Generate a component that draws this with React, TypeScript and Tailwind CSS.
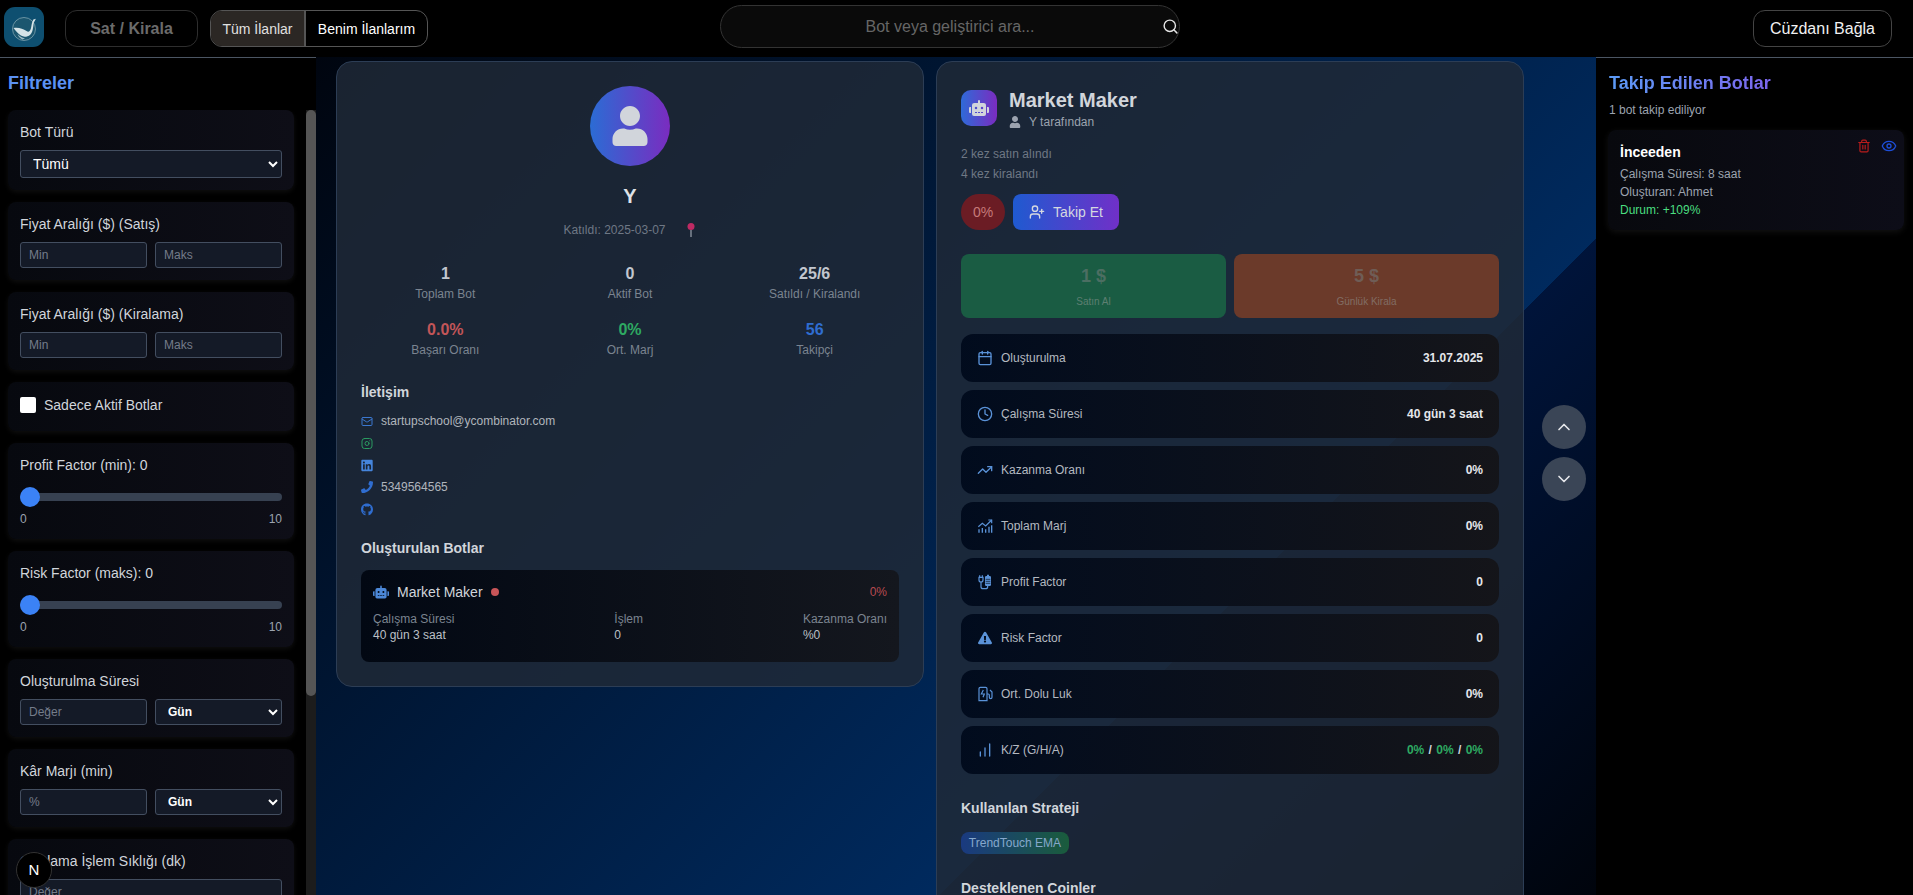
import React from 'react';
import {
  Calendar,
  ChartNoAxesColumnIncreasing,
  ChevronDown,
  ChevronUp,
  Clock,
  Eye,
  Instagram,
  Mail,
  Search,
  Trash2,
  TrendingUp,
  UserPlus,
} from 'lucide-react';
import { FaExclamationTriangle, FaGithub, FaLinkedin, FaPhone, FaRobot, FaUser } from 'react-icons/fa';

const WhaleLogo = () => (
  <svg viewBox="0 0 40 40" className="h-10 w-10">
    <rect width="40" height="40" rx="11" fill="#0e4f70" />
    <circle cx="20" cy="22" r="11.500" fill="#1b566f" stroke="#7fa3b0" strokeWidth="0.800" />
    <path d="M9.500 21c4.500-1 9.500.5 13 3 2 1.400 3.600.4 4.400-2.500.6-2.500.8-5 1.600-7l.8-2 2.600-.8-1.600 3-.5 1c-.8 5-.9 9.500-3.600 12-2.800 2.300-6.500 2.700-9.300.9-2.800-1.900-5-4.300-7.400-7.600z" fill="#d5e3e7" />
    <path d="M13.500 27c2 2 4.500 3.800 7.500 4.300l-2.500 1.200c-2.500-1-4.200-3-5-5.500z" fill="#9dbac3" />
  </svg>
);

const BarsLineIcon = () => (
  <svg viewBox="0 0 24 24" className="h-4 w-4" fill="none" stroke="currentColor" strokeWidth="2">
    <path d="M3 22v-5M8 22v-7M13 22v-5M18 22v-9M22 22V11" />
    <path d="M2 13l6-5 5 4 9-9" strokeWidth="1.800" />
    <path d="M17 3h5v5" strokeWidth="1.800" />
  </svg>
);

const PlugBatteryIcon = () => (
  <svg viewBox="0 0 24 24" className="h-4 w-4" fill="none" stroke="currentColor" strokeWidth="1.800">
    <path d="M4 2v3M8 2v3M3 5h6v4a3 3 0 0 1-6 0z" />
    <path d="M6 12v7a3 3 0 0 0 3 3h4a3 3 0 0 0 3-3v-1" />
    <path d="M14 3h1V1h3v2h1a2 2 0 0 1 2 2v11a2 2 0 0 1-2 2h-5a2 2 0 0 1-2-2V5a2 2 0 0 1 2-2z" fill="currentColor" stroke="none" />
    <path d="M13 8h7M13 11h7M13 14h7" stroke="#060d1b" strokeWidth="1" />
  </svg>
);

const FuelIcon = () => (
  <svg viewBox="0 0 24 24" className="h-4 w-4" fill="none" stroke="currentColor" strokeWidth="1.800">
    <path d="M3 22V4a2 2 0 0 1 2-2h8a2 2 0 0 1 2 2v18z" />
    <path d="M9.500 6l-3 6h4.500l-2 5" />
    <path d="M15 12h2a1.500 1.500 0 0 1 1.500 1.500V17a2 2 0 0 0 4 0V9l-3-3" />
  </svg>
);

const PinIcon = () => (
  <svg viewBox="0 0 12 16" className="h-4 w-3">
    <path d="M6 8v7" stroke="#9ca3af" strokeWidth="1.200" />
    <circle cx="6" cy="4.500" r="3.500" fill="#be2a63" />
  </svg>
);

const fieldClass =
  'h-[26px] min-w-0 rounded-[3px] border border-[#434e60] bg-[#141a27] px-2 text-xs text-white outline-none placeholder:text-[#747c8a]';
const selectClass =
  'rounded-[3px] border border-[#434e60] bg-[#141a27] px-2 text-white outline-none [color-scheme:dark]';

const FilterCard = ({ label, children }: { label?: string; children: React.ReactNode }) => (
  <div className="rounded-lg bg-[linear-gradient(to_right,#07090f,#0e0e17)] p-3 shadow-[0_2px_5px_rgba(255,255,255,0.06)]">
    {label && <div className="mb-2 text-sm leading-5 text-[#d1d5db]">{label}</div>}
    {children}
  </div>
);

const RangePair = () => (
  <div className="grid grid-cols-2 gap-2">
    <input className={fieldClass} placeholder="Min" />
    <input className={fieldClass} placeholder="Maks" />
  </div>
);

const ValueUnit = ({ placeholder }: { placeholder: string }) => (
  <div className="grid grid-cols-2 gap-2">
    <input className={fieldClass} placeholder={placeholder} />
    <select className={`${selectClass} h-[26px] text-xs font-semibold`}>
      <option>Gün</option>
    </select>
  </div>
);

const SliderFilter = ({ label }: { label: string }) => (
  <FilterCard>
    <div className="mb-3 text-sm leading-5 text-[#d1d5db]">{label}</div>
    <div className="flex h-5 items-center">
      <div className="h-2 flex-1 rounded-full bg-[#374151]">
        <div className="-mt-[6px] h-5 w-5 rounded-full bg-[#3b82f6]" />
      </div>
    </div>
    <div className="mt-1 flex justify-between text-xs leading-4 text-[#9ca3af]">
      <span>0</span>
      <span>10</span>
    </div>
  </FilterCard>
);

const FilterSidebar = () => (
  <aside className="flex w-[316px] shrink-0 flex-col border-t border-[#4b5563] bg-black">
    <h2 className="mt-[11px] mb-[13px] pl-2 text-lg leading-7 font-bold text-[#5b91f2]">Filtreler</h2>
    <div className="flex min-h-0 flex-1">
      <div className="flex min-w-0 flex-1 flex-col gap-3 overflow-hidden pr-3 pl-2">
        <FilterCard label="Bot Türü">
          <select className={`${selectClass} h-7 w-full text-sm`}>
            <option>Tümü</option>
          </select>
        </FilterCard>
        <FilterCard label="Fiyat Aralığı ($) (Satış)">
          <RangePair />
        </FilterCard>
        <FilterCard label="Fiyat Aralığı ($) (Kiralama)">
          <RangePair />
        </FilterCard>
        <FilterCard>
          <label className="mb-1 flex h-[21px] items-center gap-2 text-sm text-[#d1d5db]">
            <span className="h-4 w-4 rounded-[2px] bg-white" />
            Sadece Aktif Botlar
          </label>
        </FilterCard>
        <SliderFilter label="Profit Factor (min): 0" />
        <SliderFilter label="Risk Factor (maks): 0" />
        <FilterCard label="Oluşturulma Süresi">
          <ValueUnit placeholder="Değer" />
        </FilterCard>
        <FilterCard label="Kâr Marjı (min)">
          <ValueUnit placeholder="%" />
        </FilterCard>
        <FilterCard label="Ortalama İşlem Sıklığı (dk)">
          <input className={`${fieldClass} w-full`} placeholder="Değer" />
        </FilterCard>
      </div>
      {/* scrollbar */}
      <div className="w-[10px] shrink-0 bg-[#1c1c1c]">
        <div className="h-[586px] rounded-full bg-[#555]" />
      </div>
    </div>
  </aside>
);

const Header = () => (
  <header className="flex h-[57px] shrink-0 items-center bg-black">
    <div className="ml-1 shrink-0 -translate-y-[2px]">
      <WhaleLogo />
    </div>
    <button className="ml-[21px] h-[37px] w-[133px] rounded-xl border border-[#2e2e2e] text-base font-bold text-[#6b6b6b]">
      Sat / Kirala
    </button>
    <div className="ml-3 flex h-[37px] overflow-hidden rounded-xl border border-[#555]">
      <button className="w-[95px] border-r-2 border-[#555] bg-[#2b2724] text-sm text-[#e0e0e0]">Tüm İlanlar</button>
      <button className="w-[121px] text-sm text-white">Benim İlanlarım</button>
    </div>
    <div className="relative ml-[292px] flex h-[43px] w-[460px] items-center justify-center rounded-full border border-[#333] bg-[#0a0a0a] -translate-y-[2px]">
      <span className="text-base text-[#666]">Bot veya geliştirici ara...</span>
      <Search size={17} className="absolute right-0 text-[#e5e5e5]" />
    </div>
    <button className="ml-auto mr-[21px] h-[37px] w-[139px] rounded-xl border border-[#444] text-base text-[#f0f0f0]">
      Cüzdanı Bağla
    </button>
  </header>
);

const stats = [
  { value: '1', label: 'Toplam Bot', color: 'text-[#c2c7cf]' },
  { value: '0', label: 'Aktif Bot', color: 'text-[#c2c7cf]' },
  { value: '25/6', label: 'Satıldı / Kiralandı', color: 'text-[#c2c7cf]' },
  { value: '0.0%', label: 'Başarı Oranı', color: 'text-[#c25558]' },
  { value: '0%', label: 'Ort. Marj', color: 'text-[#2eaa62]' },
  { value: '56', label: 'Takipçi', color: 'text-[#2f6dd0]' },
];

const contacts = [
  { icon: <Mail size={13} className="text-[#3b78d0]" />, text: 'startupschool@ycombinator.com' },
  { icon: <Instagram size={13} className="text-[#2a9a60]" /> },
  { icon: <FaLinkedin size={13} className="text-[#4585dc]" /> },
  { icon: <FaPhone size={12} className="text-[#2f6dd0]" />, text: '5349564565' },
  { icon: <FaGithub size={13} className="text-[#2f6dd0]" /> },
];

const ProfileCard = () => (
  <section className="rounded-2xl border border-[#2c3d55] bg-[#1f2937]/85 p-6">
    <div className="flex flex-col items-center">
      <div className="flex h-20 w-20 items-center justify-center rounded-full bg-[linear-gradient(to_right,#2b6cd4,#7a2cc0)]">
        <FaUser size={40} className="text-[#d1d5db]" />
      </div>
      <div className="mt-4 text-xl leading-7 font-bold text-[#dfe2e7]">Y</div>
      <div className="mt-[12px] flex items-center gap-[19px] text-xs leading-4 text-[#6f7885]">
        <span>Katıldı: 2025-03-07</span>
        <PinIcon />
      </div>
    </div>
    <div className="mt-[24px] grid grid-cols-3 gap-x-4 gap-y-4 text-center">
      {stats.map(s => (
        <div key={s.label}>
          <div className={`text-base leading-6 font-bold ${s.color}`}>{s.value}</div>
          <div className="text-xs leading-4 text-[#7b8490]">{s.label}</div>
        </div>
      ))}
    </div>
    <h3 className="mt-[24px] text-sm leading-5 font-bold text-[#d1d5db]">İletişim</h3>
    <div className="mt-[11px] flex flex-col gap-[6px]">
      {contacts.map((c, i) => (
        <div key={i} className="flex h-4 items-center gap-2 text-xs text-[#b0b5bc]">
          <span className="flex w-3 justify-center">{c.icon}</span>
          {c.text && <span>{c.text}</span>}
        </div>
      ))}
    </div>
    <h3 className="mt-[21px] text-sm leading-5 font-bold text-[#d1d5db]">Oluşturulan Botlar</h3>
    <div className="mt-3 h-[92px] rounded-lg bg-[linear-gradient(to_right,#020813,#14171e)] p-3">
      <div className="flex h-5 items-center justify-between">
        <div className="flex items-center gap-2">
          <FaRobot size={16} className="text-[#4c88d8]" />
          <span className="text-sm text-[#d1d5db]">Market Maker</span>
          <span className="h-2 w-2 rounded-full bg-[#c85558]" />
        </div>
        <span className="text-xs text-[#b84a50]">0%</span>
      </div>
      <div className="mt-[9px] flex justify-between text-xs leading-4">
        <div>
          <div className="text-[#7b8490]">Çalışma Süresi</div>
          <div className="font-medium text-[#bcc0c6]">40 gün 3 saat</div>
        </div>
        <div>
          <div className="text-[#7b8490]">İşlem</div>
          <div className="font-medium text-[#bcc0c6]">0</div>
        </div>
        <div>
          <div className="text-[#7b8490]">Kazanma Oranı</div>
          <div className="font-medium text-[#bcc0c6]">%0</div>
        </div>
      </div>
    </div>
  </section>
);

const metricRows = [
  { icon: <Calendar size={16} />, label: 'Oluşturulma', value: '31.07.2025' },
  { icon: <Clock size={16} />, label: 'Çalışma Süresi', value: '40 gün 3 saat' },
  { icon: <TrendingUp size={16} />, label: 'Kazanma Oranı', value: '0%' },
  { icon: <BarsLineIcon />, label: 'Toplam Marj', value: '0%' },
  { icon: <PlugBatteryIcon />, label: 'Profit Factor', value: '0' },
  { icon: <FaExclamationTriangle size={14} />, label: 'Risk Factor', value: '0' },
  { icon: <FuelIcon />, label: 'Ort. Dolu Luk', value: '0%' },
];

const MetricRow = ({ icon, label, children }: { icon: React.ReactNode; label: string; children: React.ReactNode }) => (
  <div className="flex h-12 items-center justify-between rounded-xl bg-[linear-gradient(to_right,rgba(0,10,28,0.95),rgba(20,20,24,0.95))] px-4">
    <div className="flex items-center gap-2 text-xs text-[#b4b9c0]">
      <span className="flex w-4 justify-center text-[#5a92d8]">{icon}</span>
      {label}
    </div>
    {children}
  </div>
);

const BotDetailCard = () => (
  <section className="rounded-2xl border border-[#2c3d55] bg-[#1f2937]/85 p-6 pb-10">
    <div className="mt-[4px] flex gap-3">
      <div className="flex h-9 w-9 items-center justify-center rounded-[10px] bg-[linear-gradient(to_right,#2f6ad8,#7a2cc0)]">
        <FaRobot size={20} className="text-[#d1d5db]" />
      </div>
      <div>
        <h1 className="-mt-[4px] text-xl leading-7 font-bold text-[#d1d5db]">Market Maker</h1>
        <div className="flex items-center gap-2 text-xs leading-4 text-[#9ca3af]">
          <FaUser size={12} />Y tarafından
        </div>
      </div>
    </div>
    <div className="mt-4 flex flex-col gap-1 text-xs leading-4 text-[#6f7885]">
      <span>2 kez satın alındı</span>
      <span>4 kez kiralandı</span>
    </div>
    <div className="mt-3 flex gap-2">
      <span className="flex h-9 w-11 items-center justify-center rounded-full bg-[#6b1c24] text-sm text-[#c67a7a]">0%</span>
      <button className="flex h-9 w-[106px] items-center justify-center gap-2 rounded-lg bg-[linear-gradient(to_right,#1f5ad0,#7030c8)] text-sm text-[#d5d8e0]">
        <UserPlus size={16} />
        Takip Et
      </button>
    </div>
    <div className="mt-6 grid grid-cols-2 gap-2">
      <div className="flex h-16 flex-col items-center justify-center rounded-lg bg-[#1a5c43]">
        <span className="text-lg leading-7 font-bold text-[#4c6e62]">1 $</span>
        <span className="mt-1 text-[10px] leading-4 text-[#5d7f72]">Satın Al</span>
      </div>
      <div className="flex h-16 flex-col items-center justify-center rounded-lg bg-[#6b3a2a]">
        <span className="text-lg leading-7 font-bold text-[#6f5d56]">5 $</span>
        <span className="mt-1 text-[10px] leading-4 text-[#826d64]">Günlük Kirala</span>
      </div>
    </div>
    <div className="mt-4 flex flex-col gap-2">
      {metricRows.map(r => (
        <MetricRow key={r.label} icon={r.icon} label={r.label}>
          <span className="text-xs font-bold text-[#e5e7eb]">{r.value}</span>
        </MetricRow>
      ))}
      <MetricRow icon={<ChartNoAxesColumnIncreasing size={16} />} label="K/Z (G/H/A)">
        <span className="text-xs font-bold text-[#d1d5db]">
          <span className="text-[#2eaa62]">0%</span>
          <span className="mx-px"> / </span>
          <span className="text-[#2eaa62]">0%</span>
          <span className="mx-px"> / </span>
          <span className="text-[#2eaa62]">0%</span>
        </span>
      </MetricRow>
    </div>
    <h3 className="mt-6 text-sm leading-5 font-bold text-[#d1d5db]">Kullanılan Strateji</h3>
    <span className="mt-[14px] flex h-[22px] w-[108px] items-center justify-center rounded-lg bg-[linear-gradient(to_right,#1a3a80,#1a5c3c)] text-xs text-[#86a8cc]">
      TrendTouch EMA
    </span>
    <h3 className="mt-6 text-sm leading-5 font-bold text-[#d1d5db]">Desteklenen Coinler</h3>
  </section>
);

const FollowedSidebar = () => (
  <aside className="w-[317px] shrink-0 border-t border-[#4b5563] bg-black pr-[9px] pl-3">
    <h2 className="mt-[11px] w-fit bg-[linear-gradient(to_right,#5b9bf5,#7c66ee)] bg-clip-text pl-px text-lg leading-7 font-bold text-transparent">
      Takip Edilen Botlar
    </h2>
    <p className="mt-[5px] pl-px text-xs leading-4 text-[#9ca3af]">1 bot takip ediliyor</p>
    <div className="relative mt-3 h-[100px] rounded-lg bg-[linear-gradient(to_right,#08090e,#0d0d18)] p-3 shadow-[0_2px_6px_rgba(255,255,255,0.07)]">
      <div className="absolute top-[8px] right-[7px] flex items-center gap-[10px]">
        <Trash2 size={14} className="text-[#b91c1c]" />
        <Eye size={16} className="text-[#1d4ed8]" />
      </div>
      <div className="text-sm leading-5 font-bold text-white">İnceeden</div>
      <div className="mt-[3px] text-xs leading-[18px] text-[#9ca3af]">
        <div>Çalışma Süresi: 8 saat</div>
        <div>Oluşturan: Ahmet</div>
        <div className="text-[#4ade80]">Durum: +109%</div>
      </div>
    </div>
  </aside>
);

const App: React.FC = () => {
  return (
    <div className="flex h-screen flex-col overflow-hidden bg-black font-['Liberation_Sans',Arial,sans-serif]">
      <Header />
      <div className="flex min-h-0 flex-1">
        <FilterSidebar />
        <main className="relative min-w-0 flex-1 overflow-hidden bg-[linear-gradient(135deg,#00050f_0%,#002a5e_69%,#00143a_69%,#00040c_100%)] px-5 pt-1">
          <div className="grid w-[1188px] grid-cols-2 items-start gap-3">
            <ProfileCard />
            <BotDetailCard />
          </div>
          {/* scroll buttons float over the page */}
          <div className="absolute top-[348px] right-[10px] flex flex-col gap-2">
            <button className="flex h-11 w-11 items-center justify-center rounded-full bg-[#3a4556] text-[#e5e7eb]">
              <ChevronUp size={20} />
            </button>
            <button className="flex h-11 w-11 items-center justify-center rounded-full bg-[#3a4556] text-[#e5e7eb]">
              <ChevronDown size={20} />
            </button>
          </div>
        </main>
        <FollowedSidebar />
      </div>
      {/* dev badge */}
      <div className="fixed bottom-[7px] left-4 flex h-9 w-9 items-center justify-center rounded-full border border-[#333] bg-black text-[15px] text-white">
        N
      </div>
    </div>
  );
};

export default App;
